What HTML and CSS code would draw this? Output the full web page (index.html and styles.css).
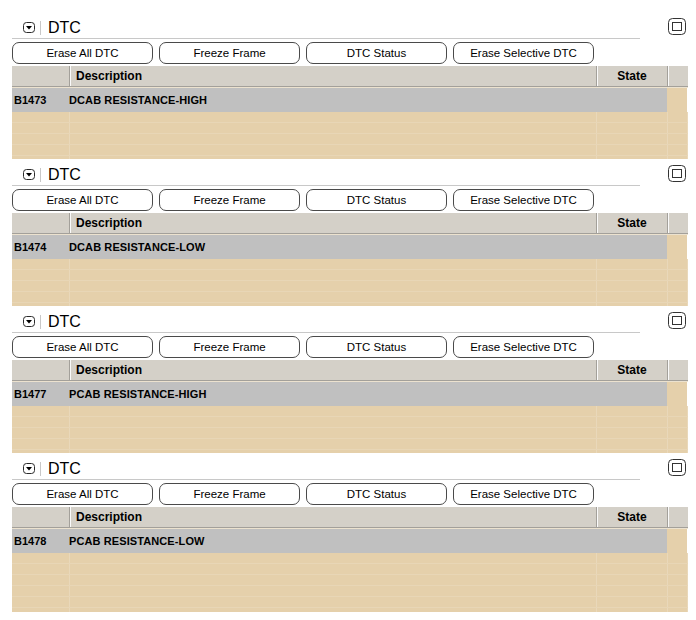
FILE: index.html
```html
<!DOCTYPE html>
<html lang="en">
<head>
  <meta charset="UTF-8" />
  <title>DTC</title>
  <link rel="stylesheet" href="styles.css">
</head>
<body>

  <div class="panel">
    <div class="panel-head">
      <div class="head-main">
        <svg class="collapse" width="12" height="11" viewBox="0 0 12 11"><rect x="0.5" y="0.5" width="11" height="10" rx="3" fill="#fff" stroke="#2a2a2a"/><path d="M3 4h6l-3 3.5z" fill="#000"/></svg>
        <span class="head-sep"></span>
        <span class="head-title">DTC</span>
      </div>
      <svg class="maximize" width="18" height="17" viewBox="0 0 18 17"><rect x="0.5" y="0.5" width="17" height="16" rx="4" fill="#fff" stroke="#333"/><rect x="4.5" y="4.5" width="9" height="8" fill="none" stroke="#333"/></svg>
    </div>
    <div class="actions">
      <button>Erase All DTC</button>
      <button>Freeze Frame</button>
      <button>DTC Status</button>
      <button>Erase Selective DTC</button>
    </div>
    <div class="grid">
      <div class="grid-head">
        <div class="h-cell c-code"></div>
        <div class="h-cell c-desc">Description</div>
        <div class="h-cell c-state">State</div>
        <div class="c-end"></div>
      </div>
      <div class="row-sel">
        <div class="c-code">B1473</div>
        <div class="c-desc">DCAB RESISTANCE-HIGH</div>
        <div class="c-state"></div>
        <div class="c-end"></div>
      </div>
      <div class="blank">
        <div class="blank-row"><i class="c-code"></i><i class="c-desc"></i><i class="c-state"></i><i class="c-end"></i></div>
        <div class="blank-row"><i class="c-code"></i><i class="c-desc"></i><i class="c-state"></i><i class="c-end"></i></div>
        <div class="blank-row"><i class="c-code"></i><i class="c-desc"></i><i class="c-state"></i><i class="c-end"></i></div>
        <div class="blank-row"><i class="c-code"></i><i class="c-desc"></i><i class="c-state"></i><i class="c-end"></i></div>
        <div class="blank-row"><i class="c-code"></i><i class="c-desc"></i><i class="c-state"></i><i class="c-end"></i></div>
      </div>
    </div>
  </div>

  <div class="panel">
    <div class="panel-head">
      <div class="head-main">
        <svg class="collapse" width="12" height="11" viewBox="0 0 12 11"><rect x="0.5" y="0.5" width="11" height="10" rx="3" fill="#fff" stroke="#2a2a2a"/><path d="M3 4h6l-3 3.5z" fill="#000"/></svg>
        <span class="head-sep"></span>
        <span class="head-title">DTC</span>
      </div>
      <svg class="maximize" width="18" height="17" viewBox="0 0 18 17"><rect x="0.5" y="0.5" width="17" height="16" rx="4" fill="#fff" stroke="#333"/><rect x="4.5" y="4.5" width="9" height="8" fill="none" stroke="#333"/></svg>
    </div>
    <div class="actions">
      <button>Erase All DTC</button>
      <button>Freeze Frame</button>
      <button>DTC Status</button>
      <button>Erase Selective DTC</button>
    </div>
    <div class="grid">
      <div class="grid-head">
        <div class="h-cell c-code"></div>
        <div class="h-cell c-desc">Description</div>
        <div class="h-cell c-state">State</div>
        <div class="c-end"></div>
      </div>
      <div class="row-sel">
        <div class="c-code">B1474</div>
        <div class="c-desc">DCAB RESISTANCE-LOW</div>
        <div class="c-state"></div>
        <div class="c-end"></div>
      </div>
      <div class="blank">
        <div class="blank-row"><i class="c-code"></i><i class="c-desc"></i><i class="c-state"></i><i class="c-end"></i></div>
        <div class="blank-row"><i class="c-code"></i><i class="c-desc"></i><i class="c-state"></i><i class="c-end"></i></div>
        <div class="blank-row"><i class="c-code"></i><i class="c-desc"></i><i class="c-state"></i><i class="c-end"></i></div>
        <div class="blank-row"><i class="c-code"></i><i class="c-desc"></i><i class="c-state"></i><i class="c-end"></i></div>
        <div class="blank-row"><i class="c-code"></i><i class="c-desc"></i><i class="c-state"></i><i class="c-end"></i></div>
      </div>
    </div>
  </div>

  <div class="panel">
    <div class="panel-head">
      <div class="head-main">
        <svg class="collapse" width="12" height="11" viewBox="0 0 12 11"><rect x="0.5" y="0.5" width="11" height="10" rx="3" fill="#fff" stroke="#2a2a2a"/><path d="M3 4h6l-3 3.5z" fill="#000"/></svg>
        <span class="head-sep"></span>
        <span class="head-title">DTC</span>
      </div>
      <svg class="maximize" width="18" height="17" viewBox="0 0 18 17"><rect x="0.5" y="0.5" width="17" height="16" rx="4" fill="#fff" stroke="#333"/><rect x="4.5" y="4.5" width="9" height="8" fill="none" stroke="#333"/></svg>
    </div>
    <div class="actions">
      <button>Erase All DTC</button>
      <button>Freeze Frame</button>
      <button>DTC Status</button>
      <button>Erase Selective DTC</button>
    </div>
    <div class="grid">
      <div class="grid-head">
        <div class="h-cell c-code"></div>
        <div class="h-cell c-desc">Description</div>
        <div class="h-cell c-state">State</div>
        <div class="c-end"></div>
      </div>
      <div class="row-sel">
        <div class="c-code">B1477</div>
        <div class="c-desc">PCAB RESISTANCE-HIGH</div>
        <div class="c-state"></div>
        <div class="c-end"></div>
      </div>
      <div class="blank">
        <div class="blank-row"><i class="c-code"></i><i class="c-desc"></i><i class="c-state"></i><i class="c-end"></i></div>
        <div class="blank-row"><i class="c-code"></i><i class="c-desc"></i><i class="c-state"></i><i class="c-end"></i></div>
        <div class="blank-row"><i class="c-code"></i><i class="c-desc"></i><i class="c-state"></i><i class="c-end"></i></div>
        <div class="blank-row"><i class="c-code"></i><i class="c-desc"></i><i class="c-state"></i><i class="c-end"></i></div>
        <div class="blank-row"><i class="c-code"></i><i class="c-desc"></i><i class="c-state"></i><i class="c-end"></i></div>
      </div>
    </div>
  </div>

  <div class="panel">
    <div class="panel-head">
      <div class="head-main">
        <svg class="collapse" width="12" height="11" viewBox="0 0 12 11"><rect x="0.5" y="0.5" width="11" height="10" rx="3" fill="#fff" stroke="#2a2a2a"/><path d="M3 4h6l-3 3.5z" fill="#000"/></svg>
        <span class="head-sep"></span>
        <span class="head-title">DTC</span>
      </div>
      <svg class="maximize" width="18" height="17" viewBox="0 0 18 17"><rect x="0.5" y="0.5" width="17" height="16" rx="4" fill="#fff" stroke="#333"/><rect x="4.5" y="4.5" width="9" height="8" fill="none" stroke="#333"/></svg>
    </div>
    <div class="actions">
      <button>Erase All DTC</button>
      <button>Freeze Frame</button>
      <button>DTC Status</button>
      <button>Erase Selective DTC</button>
    </div>
    <div class="grid">
      <div class="grid-head">
        <div class="h-cell c-code"></div>
        <div class="h-cell c-desc">Description</div>
        <div class="h-cell c-state">State</div>
        <div class="c-end"></div>
      </div>
      <div class="row-sel">
        <div class="c-code">B1478</div>
        <div class="c-desc">PCAB RESISTANCE-LOW</div>
        <div class="c-state"></div>
        <div class="c-end"></div>
      </div>
      <div class="blank tall">
        <div class="blank-row"><i class="c-code"></i><i class="c-desc"></i><i class="c-state"></i><i class="c-end"></i></div>
        <div class="blank-row"><i class="c-code"></i><i class="c-desc"></i><i class="c-state"></i><i class="c-end"></i></div>
        <div class="blank-row"><i class="c-code"></i><i class="c-desc"></i><i class="c-state"></i><i class="c-end"></i></div>
        <div class="blank-row"><i class="c-code"></i><i class="c-desc"></i><i class="c-state"></i><i class="c-end"></i></div>
        <div class="blank-row"><i class="c-code"></i><i class="c-desc"></i><i class="c-state"></i><i class="c-end"></i></div>
        <div class="blank-row"><i class="c-code"></i><i class="c-desc"></i><i class="c-state"></i><i class="c-end"></i></div>
      </div>
    </div>
  </div>

</body>
</html>
```

FILE: styles.css
```css
body {
  margin: 0;
  padding: 12px 0 0 12px;
  background: #fff;
  font-family: "Liberation Sans", Arial, sans-serif;
  color: #000;
}

.panel {
  width: 676px;
}

/* title bar */
.panel-head {
  display: flex;
  align-items: flex-start;
  height: 27px;
}

.head-main {
  width: 628px;
  height: 27px;
  box-sizing: border-box;
  padding-top: 5px;
  border-bottom: 1px solid #c8c8c8;
  display: flex;
  align-items: center;
}

.collapse {
  margin-left: 11px;
}

.head-sep {
  width: 1px;
  height: 14px;
  margin-left: 5px;
  background: #c8c8c8;
}

.head-title {
  margin-left: 7px;
  font-size: 16px;
  line-height: 18px;
}

.maximize {
  margin-left: 28px;
  margin-top: 6px;
}

/* buttons */
.actions {
  display: flex;
  gap: 6px;
  margin-top: 3px;
}

.actions button {
  width: 141px;
  height: 22px;
  padding: 0;
  background: #fff;
  border: 1px solid #4a4a4a;
  border-radius: 7px;
  font-family: "Liberation Sans", Arial, sans-serif;
  font-size: 11.5px;
  color: #000;
}

/* grid */
.grid {
  margin-top: 2px;
}

.c-code { width: 58px; flex: none; box-sizing: border-box; }
.c-desc { width: 527px; flex: none; box-sizing: border-box; }
.c-state { width: 71px; flex: none; box-sizing: border-box; }
.c-end { width: 20px; flex: none; box-sizing: border-box; }

.grid-head {
  display: flex;
  height: 21px;
  box-sizing: border-box;
  background: #d4d0c8;
  border-bottom: 1px solid #a3a09a;
  font-size: 12px;
  font-weight: bold;
  line-height: 20px;
}

.h-cell {
  border-right: 1px solid #a3a09a;
  box-shadow: 1px 0 0 #fafafa;
}

.grid-head .c-desc {
  padding-left: 6px;
}

.grid-head .c-state {
  text-align: center;
}

.row-sel {
  display: flex;
  height: 25px;
  border-top: 1px solid #ece2cf;
  box-sizing: border-box;
  font-size: 11px;
  font-weight: bold;
  line-height: 24px;
}

.row-sel .c-code,
.row-sel .c-desc,
.row-sel .c-state {
  background: #c0c0c0;
}

.row-sel .c-code {
  padding-left: 2px;
}

.row-sel .c-desc {
  margin-left: -1px;
  letter-spacing: 0.1px;
}

.row-sel .c-end {
  background: #e5d0ab;
}

.blank {
  height: 47px;
  overflow: hidden;
  background: #e5d0ab;
}

.blank.tall {
  height: 59px;
}

.blank-row {
  display: flex;
  height: 11px;
  box-sizing: border-box;
  border-bottom: 1px solid #e8d6b6;
}

.blank-row i {
  height: 10px;
  border-right: 1px solid #e9d8ba;
}
```
